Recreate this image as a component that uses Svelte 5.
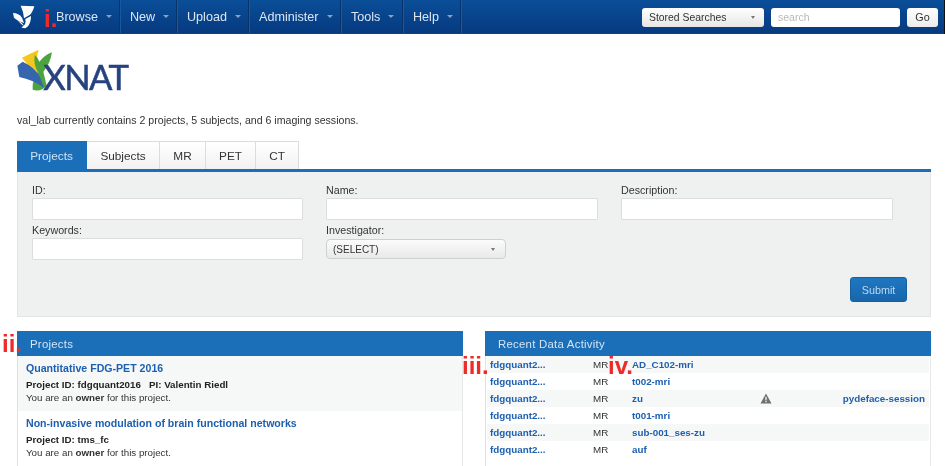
<script>
  const navItems = [
    { label: 'Browse', w: 74 },
    { label: 'New', w: 57 },
    { label: 'Upload', w: 72 },
    { label: 'Administer', w: 92 },
    { label: 'Tools', w: 62 },
    { label: 'Help', w: 58 }
  ];
  const tabs = ['Projects', 'Subjects', 'MR', 'PET', 'CT'];
  const activity = [
    { s: 'AD_C102-mri' },
    { s: 't002-mri' },
    { s: 'zu', warn: true, extra: 'pydeface-session' },
    { s: 't001-mri' },
    { s: 'sub-001_ses-zu' },
    { s: 'auf' }
  ];
</script>

<div class="page">
  <header class="nav">
    <svg class="navlogo" viewBox="36 15 72 75" aria-hidden="true">
      <path d="M62 20 L103 22 Q98 40 90 47 L72 58 Q70 36 62 20Z" fill="#fff"/>
      <path d="M39 42 Q56 42 66 56 L72 72 Q52 66 42 56Z" fill="#fff"/>
      <path d="M76 60 L93 51 Q93 70 84 82 L76 88 Q68 88 64 85 Q80 78 76 60Z" fill="#fff"/>
      <path d="M54 66 Q68 70 72 82 Q62 74 54 66Z" fill="#fff"/>
    </svg>
    <nav class="menu">
      {#each navItems as item}
        <div class="navitem" style="width:{item.w}px">
          <span>{item.label}</span><i class="caret"></i>
        </div>
      {/each}
    </nav>
    <div class="navtools">
      <div class="stored"><span>Stored Searches</span><i class="caret dark"></i></div>
      <div class="search">search</div>
      <div class="go">Go</div>
    </div>
  </header>

  <main class="main">
    <svg class="logo" viewBox="0 0 375 165" role="img" aria-label="XNAT">
      <path d="M36 38 Q60 26 86 14 Q76 40 88 66 L100 126 L88 130 Q76 84 36 38Z" fill="#f2c81e"/>
      <path d="M126 22 Q104 30 88 50 Q82 36 74 30 Q70 60 84 82 Q66 104 68 134 Q92 142 110 122 L100 80 Q120 58 126 22Z" fill="#4da33f"/>
      <path d="M22 62 L38 50 Q72 66 88 92 L102 128 Q68 104 28 96Z" fill="#3565ae"/>
      <text x="100" y="135" textLength="257" lengthAdjust="spacing" class="logotext">XNAT</text>
    </svg>

    <p class="summary">val_lab currently contains 2 projects, 5 subjects, and 6 imaging sessions.</p>

    <div class="tabs">
      {#each tabs as tab, i}
        <div class="tab" class:active={i === 0}>{tab}</div>
      {/each}
    </div>

    <form class="form">
      <div class="field"><span>ID:</span><div class="input"></div></div>
      <div class="field"><span>Name:</span><div class="input"></div></div>
      <div class="field"><span>Description:</span><div class="input"></div></div>
      <div class="field"><span>Keywords:</span><div class="input"></div></div>
      <div class="field">
        <span>Investigator:</span>
        <div class="select"><span>(SELECT)</span><i class="caret dark"></i></div>
      </div>
      <div class="submitrow"><div class="submit">Submit</div></div>
    </form>

    <div class="columns">
      <section class="box">
        <h2>Projects</h2>
        <article class="project shaded">
          <h3>Quantitative FDG-PET 2016</h3>
          <p class="meta">Project ID: fdgquant2016 &nbsp; PI: Valentin Riedl</p>
          <p>You are an <b>owner</b> for this project.</p>
        </article>
        <article class="project">
          <h3>Non-invasive modulation of brain functional networks</h3>
          <p class="meta">Project ID: tms_fc</p>
          <p>You are an <b>owner</b> for this project.</p>
        </article>
      </section>

      <section class="box">
        <h2>Recent Data Activity</h2>
        <div class="rows">
          {#each activity as row}
            <div class="row">
              <a href="#a">fdgquant2...</a>
              <span class="mod">MR</span>
              <a href="#a" class="sess">{row.s}</a>
              <span class="warn">
                {#if row.warn}
                  <svg viewBox="0 0 12 11" width="12" height="11" aria-hidden="true">
                    <path d="M6 0.5 L11.5 10.5 H0.5Z" fill="#6f6f6f"/>
                    <rect x="5.4" y="3.8" width="1.2" height="3.6" fill="#fff"/>
                    <rect x="5.4" y="8" width="1.2" height="1.2" fill="#fff"/>
                  </svg>
                {/if}
              </span>
              <a href="#a" class="extra">{row.extra ?? ''}</a>
            </div>
          {/each}
        </div>
      </section>
    </div>
  </main>

  <span class="note n1">i.</span>
  <span class="note n2">ii.</span>
  <span class="note n3">iii.</span>
  <span class="note n4">iv.</span>
</div>

<style>
  :global(body) { margin: 0; background: #fff; }
  .page {
    position: relative;
    width: 945px;
    height: 466px;
    overflow: hidden;
    background: #fff;
    font-family: "Liberation Sans", Arial, sans-serif;
    font-size: 10.6px;
    color: #333;
    filter: blur(0.4px);
  }
  .nav {
    box-sizing: border-box;
    width: 944px;
    height: 34px;
    display: flex;
    align-items: center;
    background: linear-gradient(#0a4e98, #063a80);
    border-bottom: 1px solid #1d4272;
    box-shadow: 1px 0 0 #111;
  }
  .navlogo { width: 24px; height: 25px; margin: 0 10px 0 12px; flex: none; }
  .menu { display: flex; height: 33px; }
  .navitem {
    box-sizing: border-box;
    display: flex;
    align-items: center;
    padding-left: 10px;
    color: #dbe6f2;
    font-size: 12.6px;
    border-right: 1px solid #083469;
    box-shadow: 1px 0 0 #15599f;
  }
  .navitem .caret { margin-left: 8px; }
  .caret {
    display: block;
    width: 0;
    height: 0;
    border-left: 3px solid transparent;
    border-right: 3px solid transparent;
    border-top: 3px solid #86a2c5;
  }
  .caret.dark { border-left-width: 2.5px; border-right-width: 2.5px; border-top-color: #777; }
  .navtools { display: flex; margin-left: auto; gap: 7px; margin-right: 6px; margin-top: 1px; }
  .stored, .search, .go {
    box-sizing: border-box;
    height: 19px;
    border-radius: 3px;
    background: #fff;
    display: flex;
    align-items: center;
  }
  .stored {
    width: 122px;
    padding: 0 9px 0 7px;
    justify-content: space-between;
    background: linear-gradient(#fff, #e6e6e6);
    color: #333;
    font-size: 10.4px;
  }
  .search { width: 129px; padding-left: 7px; color: #b9b9b9; font-size: 10.5px; }
  .go {
    width: 31px;
    justify-content: center;
    color: #333;
    font-size: 10.8px;
    background: linear-gradient(#fff, #ececec);
  }

  .main { padding: 0 14px 0 17px; }
  .logo { display: block; width: 125px; height: 55px; margin: 11px 0 0 -7px; }
  .logotext {
    font-family: Lato, "Open Sans", sans-serif;
    font-size: 104px;
    font-weight: 400;
    fill: #26437f;
    stroke: #26437f;
    stroke-width: 1.5px;
  }
  .summary { margin: 0; height: 41px; padding-top: 14px; box-sizing: border-box; font-size: 10.6px; line-height: 13px; color: #333; }

  .tabs { display: flex; height: 28px; border-bottom: 3px solid #1b6fb9; }
  .tab {
    box-sizing: border-box;
    height: 28px;
    display: flex;
    align-items: center;
    justify-content: center;
    border: 1px solid #dcdcdc;
    border-bottom: none;
    border-left-width: 0;
    background: linear-gradient(#fff, #f2f2f2);
    color: #333;
    font-size: 11.8px;
  }
  .tab:nth-child(1) { width: 70px; }
  .tab:nth-child(2) { width: 73px; }
  .tab:nth-child(3) { width: 46px; }
  .tab:nth-child(4) { width: 50px; }
  .tab:nth-child(5) { width: 43px; }
  .tab.active {
    background: #1b6fb9;
    border-color: #1b6fb9;
    color: #cfe2f4;
    height: 29px;
  }

  .form {
    box-sizing: border-box;
    height: 145px;
    margin: 0;
    padding: 12px 37px 0 14px;
    display: grid;
    grid-template-columns: 271px 272px 272px;
    column-gap: 23px;
    grid-template-rows: 40px 42px auto;
    background: #eff1f1;
    border: 1px solid #e3e5e5;
    border-top: none;
  }
  .field { display: flex; flex-direction: column; gap: 2px; }
  .field > span { font-size: 10.7px; line-height: 12px; color: #333; }
  .input {
    box-sizing: border-box;
    height: 22px;
    background: #fff;
    border: 1px solid #dcdede;
    border-radius: 1px;
  }
  .select {
    box-sizing: border-box;
    width: 180px;
    height: 20px;
    margin-top: 1px;
    padding: 0 10px 0 6px;
    display: flex;
    align-items: center;
    justify-content: space-between;
    border: 1px solid #cfcfcf;
    border-radius: 4px;
    background: linear-gradient(#fbfbfb, #e9e9e9);
    font-size: 10px;
    color: #333;
  }
  .submitrow { grid-column: 3; grid-row: 3; display: flex; justify-content: flex-end; margin-right: -14px; padding-top: 11px; }
  .submit {
    box-sizing: border-box;
    width: 57px;
    height: 25px;
    display: flex;
    align-items: center;
    justify-content: center;
    background: linear-gradient(#1f77c2, #1866ab);
    border: 1px solid #17609f;
    border-radius: 3px;
    color: #bcd8f0;
    font-size: 10.8px;
  }

  .columns { display: grid; grid-template-columns: 446px 446px; column-gap: 22px; margin-top: 14px; }
  .box { border-left: 1px solid #e0e0e0; border-right: 1px solid #e8e8e8; height: 136px; }
  .box h2 {
    margin: 0 -1px;
    height: 25px;
    padding-left: 13px;
    display: flex;
    align-items: center;
    background: #1b6fb9;
    color: #d4e4f3;
    font-size: 11.4px;
    font-weight: 400;
    letter-spacing: 0.25px;
  }
  .project { box-sizing: border-box; height: 55px; padding: 6px 0 0 8px; }
  .project.shaded { background: #f6f7f7; }
  .project h3 { margin: 0 0 3px; font-size: 10.6px; line-height: 13px; font-weight: 700; color: #1d5fb0; }
  .project p { margin: 0; font-size: 9.75px; line-height: 13px; color: #333; }
  .project p.meta { font-size: 9.75px; font-weight: 700; color: #222; }

  .rows { padding: 0 1px; }
  .row {
    display: grid;
    grid-template-columns: 103px 39px 128px 1fr 90px;
    align-items: center;
    height: 17px;
    padding: 0 4px 0 3px;
    font-size: 9.8px;
  }
  .row:nth-child(odd) { background: #f6f7f7; }
  .row a { color: #1d5fb0; font-weight: 700; text-decoration: none; }
  .mod { color: #333; }
  .warn { display: flex; align-items: center; }
  .extra { text-align: right; }

  .note {
    position: absolute;
    color: #ee2b2b;
    font-family: "Liberation Sans", Arial, sans-serif;
    font-weight: 700;
    font-size: 24px;
    line-height: 24px;
  }
  .n1 { left: 44px; top: 7px; }
  .n2 { left: 2px; top: 332px; }
  .n3 { left: 462px; top: 354px; }
  .n4 { left: 608px; top: 354px; }
</style>
